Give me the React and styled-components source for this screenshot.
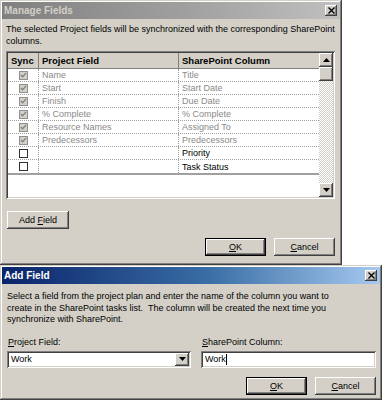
import styled, { createGlobalStyle } from "styled-components";

const GlobalStyle = createGlobalStyle`
  html, body {
    margin: 0;
    padding: 0;
    background: #ffffff;
  }
  body {
    font-family: "Liberation Sans", Arial, sans-serif;
    font-size: 9px;
    color: #000;
  }
`;

// classic windows bevels
const raised =
  "inset -1px -1px #404040, inset 1px 1px #d4d0c8, inset -2px -2px #808080, inset 2px 2px #ffffff";
const buttonBevel =
  "inset -1px -1px #404040, inset 1px 1px #ffffff, inset -2px -2px #808080, inset 2px 2px #d4d0c8";
const sunken =
  "inset 1px 1px #808080, inset -1px -1px #ffffff, inset 2px 2px #404040, inset -2px -2px #d4d0c8";

const rows = [
  { on: true, field: "Name", column: "Title", locked: true },
  { on: true, field: "Start", column: "Start Date", locked: true },
  { on: true, field: "Finish", column: "Due Date", locked: true },
  { on: true, field: "% Complete", column: "% Complete", locked: true },
  { on: true, field: "Resource Names", column: "Assigned To", locked: true },
  { on: true, field: "Predecessors", column: "Predecessors", locked: true },
  { on: false, field: "", column: "Priority", locked: false },
  { on: false, field: "", column: "Task Status", locked: false },
];

const CheckBox = ({ on, locked }) => (
  <Box $locked={locked}>
    {on && (
      <svg width="8" height="8" viewBox="0 0 8 8">
        <polyline
          points="1,4 3,6 7,1.5"
          fill="none"
          stroke={locked ? "#808080" : "#000"}
          strokeWidth="1.4"
        />
      </svg>
    )}
  </Box>
);

const CloseIcon = () => (
  <svg width="7" height="7" viewBox="0 0 7 7">
    <path d="M0.5 0.5 L6.5 6.5 M6.5 0.5 L0.5 6.5" stroke="#000" strokeWidth="1.4" />
  </svg>
);

const Arrow = ({ up }) => (
  <svg width="7" height="4" viewBox="0 0 7 4">
    <polygon points={up ? "3.5,0 7,4 0,4" : "0,0 7,0 3.5,4"} fill="#000" />
  </svg>
);

const App = () => {
  return (
    <>
      <GlobalStyle />
      <Screen>
        <Dialog $width="342px" $height="265px">
          <TitleBar>
            <Title $active={false}>Manage Fields</Title>
            <CloseBtn>
              <CloseIcon />
            </CloseBtn>
          </TitleBar>
          <ManageBody>
            <Intro $lh="12px">
              The selected Project fields will be synchronized with the corresponding SharePoint
              <br />
              columns.
            </Intro>
            <ListBox>
              <Grid>
                <HeadRow>
                  <HeadCell>Sync</HeadCell>
                  <HeadCell>Project Field</HeadCell>
                  <HeadCell>SharePoint Column</HeadCell>
                </HeadRow>
                {rows.map((r, i) => (
                  <Row key={i}>
                    <CheckCell>
                      <CheckBox on={r.on} locked={r.locked} />
                    </CheckCell>
                    <Cell $dim={r.locked}>{r.field}</Cell>
                    <Cell $dim={r.locked}>{r.column}</Cell>
                  </Row>
                ))}
              </Grid>
              <ScrollBar>
                <ScrollBtn>
                  <Arrow up />
                </ScrollBtn>
                <Track>
                  <Thumb />
                </Track>
                <ScrollBtn>
                  <Arrow />
                </ScrollBtn>
              </ScrollBar>
            </ListBox>
            <AddButton>
              Add <u>F</u>ield
            </AddButton>
            <ButtonRow>
              <Button $default>
                <u>O</u>K
              </Button>
              <Button>
                <u>C</u>ancel
              </Button>
            </ButtonRow>
          </ManageBody>
        </Dialog>

        <Dialog $width="382px" $height="135px">
          <TitleBar $active>
            <Title $active>Add Field</Title>
            <CloseBtn>
              <CloseIcon />
            </CloseBtn>
          </TitleBar>
          <AddBody>
            <Intro $lh="11.5px">
              Select a field from the project plan and enter the name of the column you want to
              <br />
              create in the SharePoint tasks list.&nbsp; The column will be created the next time you
              <br />
              synchronize with SharePoint.
            </Intro>
            <FieldRow>
              <Field $width="184px">
                <Label>
                  <u>P</u>roject Field:
                </Label>
                <Combo>
                  <InputText>Work</InputText>
                  <DropBtn>
                    <Arrow />
                  </DropBtn>
                </Combo>
              </Field>
              <Field $width="175px">
                <Label>
                  <u>S</u>harePoint Column:
                </Label>
                <TextBox>
                  <InputText>
                    Work<Caret />
                  </InputText>
                </TextBox>
              </Field>
            </FieldRow>
            <ButtonRow>
              <Button $default>
                <u>O</u>K
              </Button>
              <Button>
                <u>C</u>ancel
              </Button>
            </ButtonRow>
          </AddBody>
        </Dialog>
      </Screen>
    </>
  );
};

export default App;

const Screen = styled.div`
  width: 382px;
  height: 400px;
  display: flex;
  flex-direction: column;
  overflow: hidden;
`;

const Dialog = styled.div`
  width: ${(p) => p.$width};
  height: ${(p) => p.$height};
  box-sizing: border-box;
  background: #d4d0c8;
  box-shadow: ${raised};
  padding: 2px 2px 0 2px;
  display: flex;
  flex-direction: column;
  flex-shrink: 0;
`;

const TitleBar = styled.div`
  height: 17px;
  display: flex;
  align-items: center;
  justify-content: space-between;
  padding: 0 3px 0 2px;
  background: ${(p) =>
    p.$active
      ? "linear-gradient(90deg, #0a246a 0%, #3a6ea5 55%, #a6caf0 100%)"
      : "linear-gradient(90deg, #808080 0%, #a0a0a0 55%, #c0c0c0 100%)"};
`;

const Title = styled.span`
  font-family: "Liberation Sans", Arial, sans-serif;
  font-weight: bold;
  font-size: 10px;
  color: ${(p) => (p.$active ? "#ffffff" : "#d4d0c8")};
`;

const CloseBtn = styled.div`
  width: 12px;
  height: 11px;
  background: #d4d0c8;
  box-shadow: ${buttonBevel};
  display: flex;
  align-items: center;
  justify-content: center;
`;

const ManageBody = styled.div`
  flex: 1;
  display: flex;
  flex-direction: column;
  padding: 4px 5px 0 4px;
`;

const Intro = styled.p`
  margin: 0;
  line-height: ${(p) => p.$lh};
  color: #000;
  white-space: nowrap;
`;

const ListBox = styled.div`
  margin-top: 4px;
  height: 148px;
  display: flex;
  box-shadow: ${sunken};
  background: #ffffff;
  padding: 2px;
  box-sizing: border-box;
`;

const Grid = styled.div`
  width: 311px;
  align-self: flex-start;
  border-bottom: 2px solid #a0a0a0;
`;

const HeadRow = styled.div`
  display: grid;
  grid-template-columns: 31px 140px 140px;
  height: 15px;
  background: #d4d0c8;
  border-bottom: 1px solid #808080;
`;

const HeadCell = styled.div`
  font-weight: bold;
  font-size: 9.5px;
  padding-left: 3px;
  display: flex;
  align-items: center;
  border-right: 1px solid #808080;
  &:last-child {
    border-right: none;
  }
`;

const Row = styled.div`
  display: grid;
  grid-template-columns: 31px 140px 140px;
  height: 13px;
  border-bottom: 1px dotted #a0a0a0;
  box-sizing: border-box;
  &:last-child {
    border-bottom: none;
  }
`;

const Cell = styled.div`
  display: flex;
  align-items: center;
  padding-left: 3px;
  color: ${(p) => (p.$dim ? "#8a8a8a" : "#000")};
  border-right: 1px dotted #a0a0a0;
  white-space: nowrap;
  &:last-child {
    border-right: none;
  }
`;

const CheckCell = styled.div`
  display: flex;
  align-items: center;
  justify-content: center;
  border-right: 1px dotted #a0a0a0;
`;

const Box = styled.div`
  width: 9px;
  height: 9px;
  box-sizing: border-box;
  border: 1px solid ${(p) => (p.$locked ? "#909090" : "#303030")};
  background: ${(p) => (p.$locked ? "#d4d0c8" : "#ffffff")};
  display: flex;
  align-items: center;
  justify-content: center;
`;

const ScrollBar = styled.div`
  margin-left: auto;
  width: 15px;
  display: flex;
  flex-direction: column;
`;

const ScrollBtn = styled.div`
  height: 14px;
  background: #d4d0c8;
  box-shadow: ${buttonBevel};
  display: flex;
  align-items: center;
  justify-content: center;
`;

const Track = styled.div`
  flex: 1;
  background: repeating-conic-gradient(#d4d0c8 0 25%, #ffffff 0 50%) 0 0 / 2px 2px;
`;

const Thumb = styled.div`
  height: 14px;
  background: #d4d0c8;
  box-shadow: ${buttonBevel};
`;

const ButtonBase = styled.button`
  font-family: "Liberation Sans", Arial, sans-serif;
  font-size: 9px;
  color: #000;
  background: #d4d0c8;
  border: none;
  padding: 0;
  height: 18px;
  box-shadow: ${buttonBevel};
`;

const AddButton = styled(ButtonBase)`
  margin-top: 12px;
  width: 62px;
  margin-left: 1px;
`;

const ButtonRow = styled.div`
  display: flex;
  justify-content: flex-end;
  gap: 8px;
  margin-top: 9px;
`;

const Button = styled(ButtonBase)`
  width: 61px;
  box-shadow: ${(p) =>
    p.$default
      ? "inset 0 0 0 1px #000, inset -2px -2px #404040, inset 2px 2px #ffffff, inset -3px -3px #808080"
      : buttonBevel};
`;

const AddBody = styled.div`
  flex: 1;
  display: flex;
  flex-direction: column;
  padding: 7px 4px 0 5px;
`;

const FieldRow = styled.div`
  display: flex;
  gap: 10px;
  margin-top: 11px;
`;

const Field = styled.div`
  width: ${(p) => p.$width};
  display: flex;
  flex-direction: column;
  gap: 3px;
`;

const Label = styled.span`
  line-height: 11px;
  padding-left: 1px;
`;

const Combo = styled.div`
  height: 17px;
  display: flex;
  align-items: center;
  background: #ffffff;
  box-shadow: ${sunken};
  padding: 2px;
  box-sizing: border-box;
`;

const TextBox = styled(Combo)``;

const InputText = styled.span`
  flex: 1;
  padding-left: 2px;
  display: flex;
  align-items: center;
`;

const Caret = styled.span`
  display: inline-block;
  width: 1px;
  height: 11px;
  background: #000;
`;

const DropBtn = styled.div`
  width: 14px;
  height: 13px;
  background: #d4d0c8;
  box-shadow: ${buttonBevel};
  display: flex;
  align-items: center;
  justify-content: center;
`;
